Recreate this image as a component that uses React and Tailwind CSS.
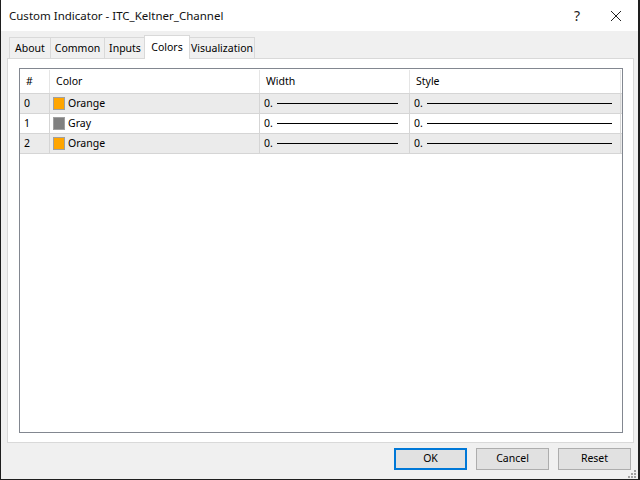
import React from 'react';

const font = { fontFamily: '"Noto Sans", "Segoe UI", sans-serif' };

const tabs = [
  { name: 'About', w: 'w-[41px]' },
  { name: 'Common', w: 'w-[54px]' },
  { name: 'Inputs', w: 'w-[41px]' },
  { name: 'Colors', w: 'w-[46px]', active: true },
  { name: 'Visualization', w: 'w-[66px]' },
];

const rows = [
  { id: 0, color: 'Orange', swatch: 'bg-[#ffa500]', shade: true },
  { id: 1, color: 'Gray', swatch: 'bg-[#808080]', shade: false },
  { id: 2, color: 'Orange', swatch: 'bg-[#ffa500]', shade: true },
];

function LineCell({ width, line }) {
  return (
    <div className={`${width} flex items-center pl-[4px] border-r border-[#d5d5d5]`}>
      <span>0.</span>
      <span className={`${line} ml-[4px] h-px bg-black`} />
    </div>
  );
}

export default function App() {
  return (
    <div className="w-[640px] h-[480px] bg-[#1e1e1e] text-[10.5px] text-black" style={font}>
      <div className="ml-px w-[637px] h-[479px] bg-[#f0f0f0] flex flex-col">
        {/* title bar */}
        <div className="h-[31px] bg-white flex items-center pl-[8px] shrink-0">
          <span className="text-[11.5px] text-[#111]">Custom Indicator - ITC_Keltner_Channel</span>
          <span className="ml-auto text-[14px] leading-none mr-[30px] text-[#222]">?</span>
          <svg width="12" height="12" viewBox="0 0 12 12" className="mr-[16px]">
            <path d="M1 1 L11 11 M11 1 L1 11" stroke="#222" strokeWidth="1" />
          </svg>
        </div>

        {/* tab strip */}
        <div className="mt-[4px] h-[23px] flex items-end pl-[8px] relative z-10">
          {tabs.map((t) =>
            t.active ? (
              <div
                key={t.name}
                className={`${t.w} h-[24px] -mb-px -mx-[1px] bg-white border border-b-0 border-[#d9d9d9] flex items-start justify-center pt-[4px]`}
              >
                {t.name}
              </div>
            ) : (
              <div
                key={t.name}
                className={`${t.w} h-[21px] bg-[#f0f0f0] border border-b-0 border-r-0 border-[#d9d9d9] last:border-r flex items-center justify-center pt-[2px]`}
              >
                {t.name}
              </div>
            )
          )}
        </div>

        {/* tab panel */}
        <div className="ml-[6px] w-[627px] h-[386px] bg-white border border-[#d9d9d9] pt-[9px] pl-[11px]">
          <div className="w-[604px] h-[365px] border border-[#828790] bg-white">
            {/* header */}
            <div className="h-[25px] flex border-b border-[#d5d5d5] pt-[1px]">
              <div className="w-[30px] pl-[6px] flex items-center border-r border-[#e5e5e5]">#</div>
              <div className="w-[210px] pl-[6px] flex items-center border-r border-[#e5e5e5]">Color</div>
              <div className="w-[150px] pl-[6px] flex items-center border-r border-[#e5e5e5]">Width</div>
              <div className="w-[211px] pl-[6px] flex items-center border-r border-[#e5e5e5]">Style</div>
            </div>
            {rows.map((r) => (
              <div
                key={r.id}
                className={`h-[20px] flex border-b border-[#d5d5d5] ${r.shade ? 'bg-[#ebebeb]' : 'bg-white'}`}
              >
                <div className="w-[30px] pl-[4px] flex items-center border-r border-[#d5d5d5]">{r.id}</div>
                <div className="w-[210px] pl-[3px] flex items-center border-r border-[#d5d5d5]">
                  <span className={`w-[12px] h-[13px] border border-[#a0a0a0] ${r.swatch}`} />
                  <span className="ml-[3px]">{r.color}</span>
                </div>
                <LineCell width="w-[150px]" line="w-[121px]" />
                <LineCell width="w-[211px]" line="w-[185px]" />
              </div>
            ))}
          </div>
        </div>

        {/* buttons */}
        <div className="flex justify-end gap-[9px] pr-[7px] mt-[5px]">
          <button className="w-[73px] h-[22px] bg-[#e1e1e1] border-2 border-[#0078d7]">OK</button>
          <button className="w-[73px] h-[22px] bg-[#e1e1e1] border border-[#adadad]">Cancel</button>
          <button className="w-[73px] h-[22px] bg-[#e1e1e1] border border-[#adadad]">Reset</button>
        </div>
        <div className="mt-auto flex justify-end pr-[2px] pb-[1px]">
          <svg width="8" height="8" viewBox="0 0 8 8">
            <rect x="6" y="0" width="2" height="2" fill="#a0a0a0" />
            <rect x="3" y="3" width="2" height="2" fill="#a0a0a0" />
            <rect x="6" y="3" width="2" height="2" fill="#a0a0a0" />
            <rect x="0" y="6" width="2" height="2" fill="#a0a0a0" />
            <rect x="3" y="6" width="2" height="2" fill="#a0a0a0" />
            <rect x="6" y="6" width="2" height="2" fill="#a0a0a0" />
          </svg>
        </div>
      </div>
    </div>
  );
}
